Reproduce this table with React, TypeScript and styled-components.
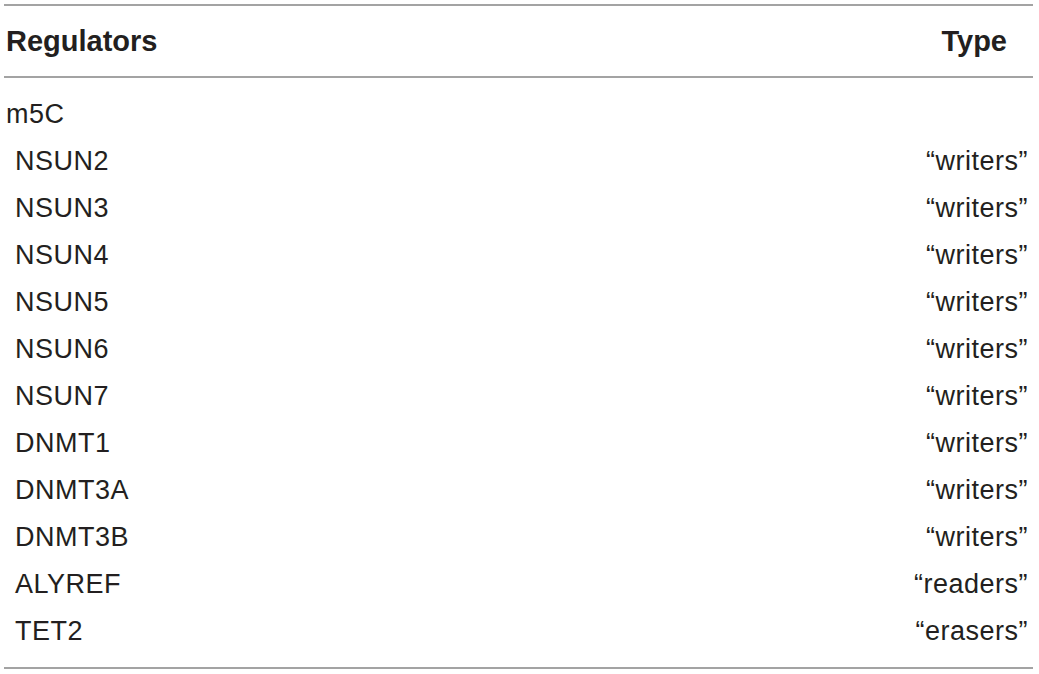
import React from "react";
import styled, { createGlobalStyle } from "styled-components";

const Global = createGlobalStyle`
  html, body { margin: 0; padding: 0; background: #fff; }
  body { font-family: "Liberation Sans", Arial, sans-serif; color: #231f20; }
`;

const Page = styled.div`
  padding: 4px 6px 0 4px;
`;

const Table = styled.div`
  width: 1029px;
  border-top: 2px solid #a3a3a3;
  border-bottom: 2px solid #a3a3a3;
`;

const HeaderRow = styled.div`
  display: flex;
  justify-content: space-between;
  align-items: center;
  height: 70px;
  padding: 0 26px 0 2px;
  border-bottom: 2px solid #a3a3a3;
  font-weight: 700;
  font-size: 29px;
`;

const Body = styled.div`
  padding: 13px 0 12px;
`;

const Row = styled.div`
  display: flex;
  justify-content: space-between;
  align-items: center;
  height: 47px;
  padding: 0 5px 0 2px;
  font-size: 27px;
  letter-spacing: 0.5px;
`;

const Name = styled.span<{ $indent?: boolean }>`
  padding-left: ${(p) => (p.$indent ? "9px" : "0")};
`;

const rows: [string, string][] = [
  ["NSUN2", "“writers”"],
  ["NSUN3", "“writers”"],
  ["NSUN4", "“writers”"],
  ["NSUN5", "“writers”"],
  ["NSUN6", "“writers”"],
  ["NSUN7", "“writers”"],
  ["DNMT1", "“writers”"],
  ["DNMT3A", "“writers”"],
  ["DNMT3B", "“writers”"],
  ["ALYREF", "“readers”"],
  ["TET2", "“erasers”"],
];

export default function App() {
  return (
    <Page>
      <Global />
      <Table>
        <HeaderRow>
          <span>Regulators</span>
          <span>Type</span>
        </HeaderRow>
        <Body>
          <Row>
            <Name>m5C</Name>
            <span />
          </Row>
          {rows.map(([n, t]) => (
            <Row key={n}>
              <Name $indent>{n}</Name>
              <span>{t}</span>
            </Row>
          ))}
        </Body>
      </Table>
    </Page>
  );
}
